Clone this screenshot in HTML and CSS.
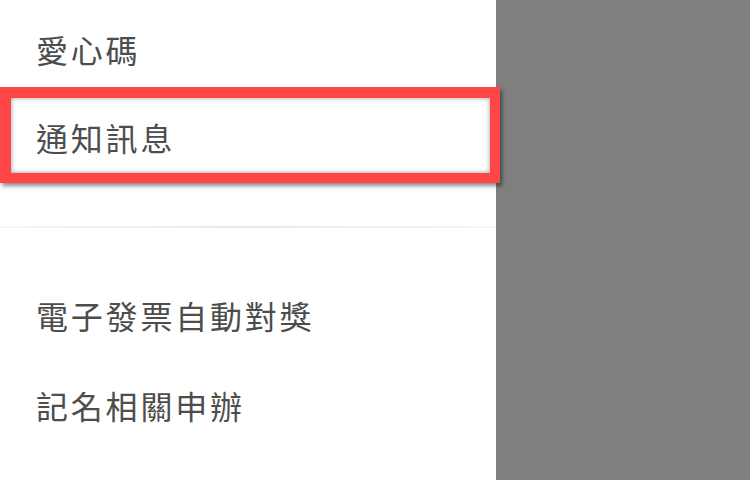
FILE: index.html
```html
<!DOCTYPE html>
<html lang="zh-Hant">
<head>
<meta charset="utf-8">
<link rel="stylesheet" href="styles.css">
</head>
<body>
<div class="screen">
  <nav class="drawer">
    <ul class="menu">
      <li class="item">愛心碼</li>
      <li class="item item-active">通知訊息<span class="highlight"></span></li>
    </ul>
    <div class="divider"></div>
    <ul class="menu menu-lower">
      <li class="item item-tall">電子發票自動對獎</li>
      <li class="item item-tall">記名相關申辦</li>
    </ul>
  </nav>
  <div class="scrim"></div>
</div>
</body>
</html>
```
FILE: styles.css
```css
html, body {
  margin: 0;
  padding: 0;
  width: 750px;
  height: 480px;
  overflow: hidden;
}
.screen {
  display: flex;
  width: 750px;
  height: 480px;
}
.drawer {
  width: 496px;
  flex: none;
  background: #ffffff;
  padding-top: 5px;
  box-sizing: border-box;
}
.scrim {
  flex: 1;
  background: #7f7f7f;
}
.menu {
  list-style: none;
  margin: 0;
  padding: 0;
}
.item {
  position: relative;
  height: 88px;
  display: flex;
  align-items: center;
  padding-left: 36px;
  font-family: "Noto Sans CJK TC", "Noto Sans", sans-serif;
  font-size: 32px;
  line-height: 1;
  letter-spacing: 2.8px;
  color: #4d4d4d;
}
.item-tall {
  height: 90px;
}
.highlight {
  position: absolute;
  left: 0;
  top: -6px;
  width: 500px;
  height: 96px;
  box-sizing: border-box;
  border-style: solid;
  border-color: #ff4646;
  border-width: 11px 10px 10px 11px;
  box-shadow: 2px 3px 4px rgba(0, 0, 0, 0.45), inset 0 0 5px rgba(0, 0, 0, 0.4);
  z-index: 2;
}
.divider {
  height: 2px;
  margin: 45px 0 42px;
  background: linear-gradient(to right, #f6f6f6, #e9e9e9 50%, #f6f6f6);
}
```
